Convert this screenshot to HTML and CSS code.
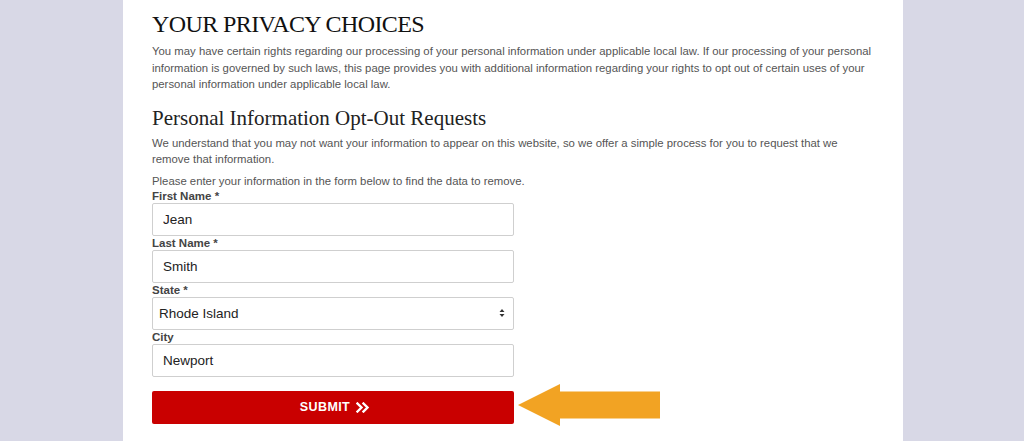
FILE: index.html
```html
<!DOCTYPE html>
<html lang="en">
<head>
<meta charset="utf-8">
<title>Your Privacy Choices</title>
<link rel="stylesheet" href="styles.css">
</head>
<body>
<div class="page">
  <main class="panel">
    <h1 class="title">YOUR PRIVACY CHOICES</h1>
    <p class="text">You may have certain rights regarding our processing of your personal information under applicable local law. If our processing of your personal information is governed by such laws, this page provides you with additional information regarding your rights to opt out of certain uses of your personal information under applicable local law.</p>
    <h2 class="subtitle">Personal Information Opt-Out Requests</h2>
    <p class="text tight">We understand that you may not want your information to appear on this website, so we offer a simple process for you to request that we remove that information.</p>
    <p class="text intro">Please enter your information in the form below to find the data to remove.</p>
    <form class="form">
      <label class="label" for="fn">First Name *</label>
      <input class="field" id="fn" type="text" value="Jean">
      <label class="label" for="ln">Last Name *</label>
      <input class="field" id="ln" type="text" value="Smith">
      <label class="label" for="st">State *</label>
      <div class="select-wrap">
        <select class="field select" id="st">
          <option>Rhode Island</option>
        </select>
        <svg class="updown" width="6" height="10" viewBox="0 0 6 10"><path d="M3 1 L5.5 4 H0.5 Z M3 9 L5.5 6 H0.5 Z" fill="#333"/></svg>
      </div>
      <label class="label" for="ct">City</label>
      <input class="field" id="ct" type="text" value="Newport">
      <div class="submit-row">
        <button class="submit" type="button"><span>SUBMIT</span><svg class="chev" width="14" height="11" viewBox="0 0 14 11"><path d="M1.5 1.5 L5.5 5.5 L1.5 9.5 M7.5 1.5 L11.5 5.5 L7.5 9.5" fill="none" stroke="#fff" stroke-width="2.4" stroke-linecap="square"/></svg></button>
        <svg class="arrow" width="146" height="46" viewBox="0 0 146 46"><path d="M0 21 L42 0 L42 7.5 L142 7.5 L142 34.5 L42 34.5 L42 42 Z" fill="#f2a323"/></svg>
      </div>
    </form>
  </main>
</div>
</body>
</html>
```
FILE: styles.css
```css
html, body {
  margin: 0;
  padding: 0;
}
body {
  background: #d8d8e6;
  font-family: "Liberation Sans", Arial, sans-serif;
}
.page {
  display: flex;
  justify-content: center;
  min-height: 441px;
}
.panel {
  width: 780px;
  margin-left: 2px;
  background: #ffffff;
  padding: 8px 27px 20px 29px;
  box-sizing: border-box;
}
.title {
  font-family: "Liberation Serif", "Times New Roman", serif;
  font-weight: normal;
  font-size: 24px;
  letter-spacing: -0.6px;
  color: #111;
  margin: 0 0 3px;
  line-height: 32px;
}
.text {
  font-size: 11.35px;
  line-height: 16.5px;
  color: #555;
  margin: 0 0 7px;
}
.subtitle {
  font-family: "Liberation Serif", "Times New Roman", serif;
  font-weight: normal;
  font-size: 21px;
  color: #222;
  margin: 12px 0 4px;
  line-height: 26px;
}
.tight {
  margin-bottom: 5px;
}
.intro {
  margin-bottom: 0;
}
.form {
  display: flex;
  flex-direction: column;
  width: 362px;
}
.label {
  font-size: 11.5px;
  font-weight: bold;
  color: #444;
  line-height: 14px;
  margin: 0;
}
.field {
  box-sizing: border-box;
  width: 362px;
  height: 33px;
  border: 1px solid #cfcfcf;
  border-radius: 2px;
  background: #fff;
  font-family: "Liberation Sans", Arial, sans-serif;
  font-size: 13.5px;
  color: #222;
  padding: 0 10px;
  margin: 0;
}
.select-wrap {
  position: relative;
  width: 362px;
}
.select {
  appearance: none;
  -webkit-appearance: none;
  padding-left: 6px;
}
.updown {
  position: absolute;
  right: 9px;
  top: 11px;
}
.submit-row {
  display: flex;
  align-items: center;
  margin-top: 7px;
  width: 520px;
}
.submit {
  flex: 0 0 362px;
  height: 33px;
  border: none;
  border-radius: 2px;
  background: #c90000;
  color: #fff;
  font-family: "Liberation Sans", Arial, sans-serif;
  font-weight: bold;
  font-size: 12.5px;
  letter-spacing: 0.4px;
  display: flex;
  align-items: center;
  justify-content: center;
  gap: 6px;
  padding: 0 0 0 4px;
}
.chev {
  display: block;
}
.arrow {
  margin-left: 4px;
  flex: none;
}
```
